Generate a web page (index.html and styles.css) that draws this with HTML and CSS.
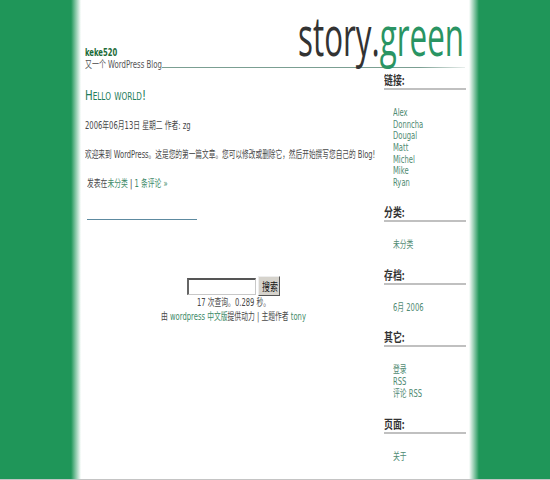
FILE: index.html
```html
<!DOCTYPE html>
<html lang="zh">
<head>
<meta charset="utf-8">
<title>keke520</title>
<link rel="stylesheet" href="styles.css">
</head>
<body>
<div class="page">
  <div class="side"></div>
  <div class="fade-left"></div>
  <div class="sheet">
    <header class="head">
      <div class="blog">
        <a class="blog-name">keke520</a>
        <div class="tagline">又一个 WordPress Blog</div>
      </div>
      <div class="logo">story.<span class="logo-green">green</span></div>
    </header>
    <div class="cols">
      <main class="main">
        <h2 class="title">Hello world!</h2>
        <p class="date">2006年06月13日 星期二 作者: zg</p>
        <p class="body-text">欢迎来到 WordPress。这是您的第一篇文章。您可以修改或删除它，然后开始撰写您自己的 Blog!</p>
        <p class="meta">发表在<a>未分类</a> <span class="pipe">|</span> <a>1 条评论 »</a></p>
        <div class="rule"></div>
        <form class="search">
          <input class="search-input" type="text">
          <button class="search-btn" type="button"><span class="search-label">搜索</span></button>
        </form>
        <p class="foot">17 次查询。0.289 秒。</p>
        <p class="foot">由 <a>wordpress 中文版</a>提供动力 | 主题作者 <a>tony</a></p>
      </main>
      <aside class="bar">
        <h3 class="bar-h first"><span class="bar-t">链接:</span></h3>
        <ul class="bar-list tight">
          <li>Alex</li><li>Donncha</li><li>Dougal</li><li>Matt</li><li>Michel</li><li>Mike</li><li>Ryan</li>
        </ul>
        <h3 class="bar-h"><span class="bar-t">分类:</span></h3>
        <ul class="bar-list"><li>未分类</li></ul>
        <h3 class="bar-h"><span class="bar-t">存档:</span></h3>
        <ul class="bar-list"><li>6月 2006</li></ul>
        <h3 class="bar-h"><span class="bar-t">其它:</span></h3>
        <ul class="bar-list"><li>登录</li><li>RSS</li><li>评论 RSS</li></ul>
        <h3 class="bar-h"><span class="bar-t">页面:</span></h3>
        <ul class="bar-list"><li>关于</li></ul>
      </aside>
    </div>
  </div>
  <div class="fade-right"></div>
  <div class="side"></div>
</div>
</body>
</html>
```
FILE: styles.css
```css
html, body { margin: 0; padding: 0; background: #fff; }
body { font-family: "DejaVu Sans", "Noto Sans CJK SC", sans-serif; font-size: 10px; color: #484848; overflow: hidden; }
a { color: #3d8a68; }
.page { display: flex; height: 479px; border-bottom: 1px solid #c4c4c4; overflow: hidden; }
.side { width: 71px; background: #1f9659; flex: none; }
.fade-left, .fade-right { width: 10px; flex: none; }
.fade-left { background: linear-gradient(to right, #1f9659, #ffffff); }
.fade-right { background: linear-gradient(to left, #1f9659, #ffffff); }
.sheet { flex: 1; min-width: 0; padding: 0 3px 0 4px; }
.head { position: relative; height: 68px; margin-right: 1px; background: linear-gradient(to right, #7b9f92 85%, #e8eeec) no-repeat right bottom / 303px 1px; }
.blog { position: absolute; left: 0; top: 47px; }
.blog-name { display: block; font: bold 11px/12px "DejaVu Sans", sans-serif; color: #1c6b38; transform: scaleX(.62); transform-origin: left; }
.tagline { line-height: 12px; white-space: nowrap; color: #555; transform: scaleX(.696); transform-origin: left; }
.logo { position: absolute; right: 1px; top: 5px; font: 54px/60px "Open Sans", sans-serif; color: #333; white-space: nowrap; transform: scaleX(.58); transform-origin: right; }
.logo-green { color: #2a9463; }
.cols { display: flex; }
.main { width: 297px; margin-right: 2px; flex: none; }
.title { margin: 18px 0 0; font: normal 14px/18px "DejaVu Sans", sans-serif; font-variant: small-caps; color: #1f7d5b; transform: scaleX(.73); transform-origin: left; white-space: nowrap; }
.date, .body-text, .meta { line-height: 14px; white-space: nowrap; transform: scaleX(.68); transform-origin: left; }
.date { margin: 15px 0 0; }
.body-text { margin: 15px 0 0; transform: scaleX(.668); }
.meta { margin: 15px 0 0 2px; }
.pipe { color: #222; line-height: 0; }
.rule { width: 110px; height: 1px; margin: 28px 0 0 2px; background: #5d8aa0; }
.search { display: flex; justify-content: center; align-items: center; gap: 2px; margin-top: 56px; height: 20px; }
.search-input { width: 69px; height: 17px; box-sizing: border-box; border: 1px solid #c8c8c8; border-top: 2px solid #555; border-left: 2px solid #666; background: #fff; padding: 0; }
.search-btn { width: 22px; height: 20px; padding: 0; border: 1px solid #eee; border-right-color: #555; border-bottom-color: #555; background: #d6d3cc; color: #111; font: 11px/16px "Noto Sans CJK SC", sans-serif; }
.search-label { display: inline-block; transform: scaleX(.72); white-space: nowrap; }
.foot { margin: 0; text-align: center; line-height: 14px; white-space: nowrap; transform: scaleX(.68); }
.bar { width: 82px; flex: none; padding-top: 2px; }
.bar-h { margin: 13.5px 0 0; height: 18px; font: bold 12px/19px "Noto Sans CJK SC", sans-serif; color: #333; border-bottom: 2px solid #c0c0c0; }
.bar-h.first { margin-top: 0; }
.bar-t { display: inline-block; transform: scaleX(.74); transform-origin: left; }
.bar-list { list-style: none; margin: 0; padding: 17px 0 0 9px; line-height: 12px; color: #4f8a72; }
.bar-list.tight { line-height: 11.67px; }
.bar-list li { white-space: nowrap; transform: scaleX(.68); transform-origin: left; }
```
